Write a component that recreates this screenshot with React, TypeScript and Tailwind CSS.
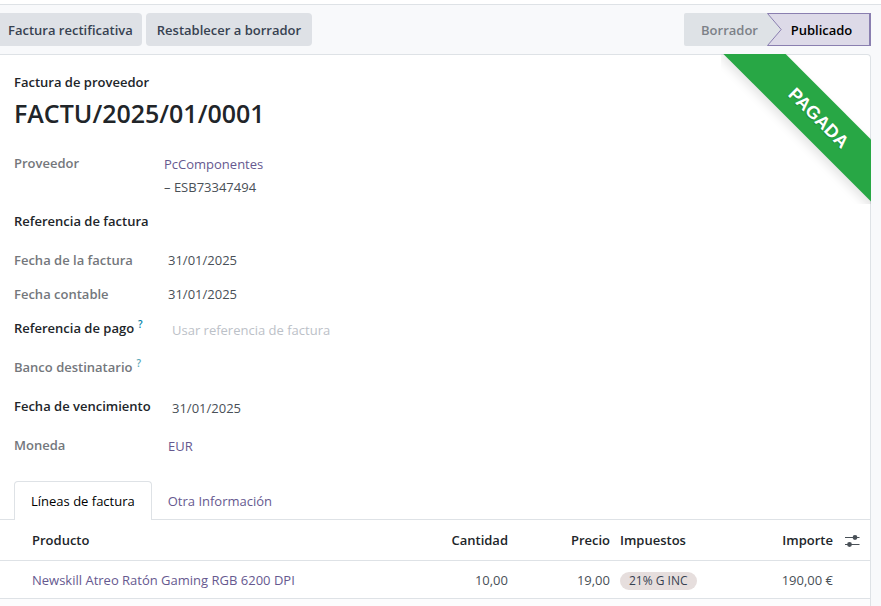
import type { ReactNode } from "react";

const labelText = "text-[13px] leading-5 font-semibold";

function Field({
  id,
  label,
  help,
  muted,
  height,
  children,
}: {
  id: string;
  label: string;
  help?: boolean;
  muted?: boolean;
  height: string;
  children?: ReactNode;
}) {
  return (
    <div className={`flex items-start ${height}`}>
      <label
        htmlFor={id}
        className={`w-[150px] shrink-0 whitespace-nowrap ${labelText} ${muted ? "text-[#74777c]" : "text-[#212529]"}`}
      >
        {label}
        {help && (
          <sup className={`ml-1 text-[10px] ${muted ? "text-[#5ba8b8]" : "text-[#0180a5]"}`}>?</sup>
        )}
      </label>
      {children}
    </div>
  );
}

const inputText =
  "min-w-0 w-60 bg-transparent pl-2 pt-[2px] text-[13px] leading-5 text-[#495057] outline-none placeholder:text-[#bcc1c8]";

function Header() {
  return (
    <header className="flex items-center justify-between border-t border-[#dee2e6] bg-[#f8f9fb] py-2 pr-[10px]">
      <div className="flex gap-1">
        <button className="h-[33px] rounded-r bg-[#dee1e6] pt-[2px] pr-[9px] pl-2 text-[13px] font-semibold text-[#374151]">
          Factura rectificativa
        </button>
        <button className="h-[33px] rounded bg-[#dee1e6] px-[11px] pt-[2px] text-[13px] font-semibold text-[#374151]">
          Restablecer a borrador
        </button>
      </div>
      <div className="flex h-[33px]">
        <button className="w-[83px] rounded-l-xs bg-[#dee2e6] pt-[2px] pl-2 text-[13px] font-semibold text-[#7c8188]">
          Borrador
        </button>
        <div className="flex bg-[#dee2e6]">
          <svg width="15" height="33" viewBox="0 0 15 33" className="block" aria-hidden="true">
            <path d="M0.5 0.5H15V32.5H0.5L14.2 16.5Z" fill="#dddae8" />
            <path d="M15 0.5H0.5L14.2 16.5L0.5 32.5H15" fill="none" stroke="#8a7fb0" />
          </svg>
          <button className="w-[89px] border-y border-r-2 border-[#8a7fb0] bg-[#dddae8] pt-[2px] pr-2 text-[13px] font-semibold text-black">
            Publicado
          </button>
        </div>
      </div>
    </header>
  );
}

function Ribbon() {
  return (
    <div className="pointer-events-none absolute -top-px -right-px size-[150px] overflow-hidden">
      <div className="absolute top-[42px] -left-[15px] flex h-11 w-[225px] rotate-45 items-center justify-center bg-[#28a745] font-['Liberation_Sans',sans-serif] text-[18px] leading-none font-bold text-white shadow-[0_5px_10px_rgba(0,0,0,0.1)] [text-shadow:0_1px_1px_rgba(0,0,0,0.2)]">
        PAGADA
      </div>
    </div>
  );
}

function SlidersIcon() {
  return (
    <svg width="16" height="14" viewBox="0 0 16 14" aria-hidden="true">
      <path d="M1 3.5H15.5M1 10.5H15.5" stroke="#495057" strokeWidth="1.2" />
      <circle cx="11" cy="3.5" r="2.4" fill="#495057" />
      <circle cx="5.5" cy="10.5" r="2.4" fill="#495057" />
    </svg>
  );
}

function Lines() {
  return (
    <table className="w-full table-fixed border-collapse text-[13px] leading-5">
      <colgroup>
        <col />
        <col className="w-[120px]" />
        <col className="w-[102px]" />
        <col className="w-[120px]" />
        <col className="w-[103px]" />
        <col className="w-[37px]" />
      </colgroup>
      <thead>
        <tr className="h-10 border-b border-[#dee2e6] font-semibold text-[#212529]">
          <th className="pl-8 text-left font-semibold">Producto</th>
          <th className="text-right font-semibold">Cantidad</th>
          <th className="text-right font-semibold">Precio</th>
          <th className="pl-[10px] text-left font-semibold">Impuestos</th>
          <th className="text-right font-semibold">Importe</th>
          <th>
            <button aria-label="Columnas opcionales" className="flex w-full justify-center pt-[2px]">
              <SlidersIcon />
            </button>
          </th>
        </tr>
      </thead>
      <tbody>
        <tr className="h-[38px] border-b border-[#dee2e6] text-[#495057] *:pt-[2px]">
          <td className="pl-8">
            <a href="#producto" className="text-[#66598f]">
              Newskill Atreo Ratón Gaming RGB 6200 DPI
            </a>
          </td>
          <td className="text-right">10,00</td>
          <td className="text-right">19,00</td>
          <td className="pl-[10px]">
            <span className="inline-block rounded-full bg-[#e6dedd] px-[9px] text-[12px] leading-[18px] font-medium text-[#374151]">
              21% G INC
            </span>
          </td>
          <td className="text-right">190,00 €</td>
          <td />
        </tr>
      </tbody>
    </table>
  );
}

export default function App() {
  return (
    <div className="flex min-h-screen flex-col bg-[#f8f9fb] font-['Open_Sans','Noto_Sans',sans-serif]">
      <div className="h-1 bg-white" />
      <Header />
      <main className="relative mr-[10px] flex grow flex-col rounded-tr border-t border-r border-[#dee2e6] bg-white">
        <Ribbon />
        <section className="px-[14px] pt-[17px]">
          <p className={`${labelText} text-[#212529]`}>Factura de proveedor</p>
          <h1 className="mt-[3px] text-[25px] leading-9 font-semibold text-[#212529]">FACTU/2025/01/0001</h1>
          <div className="mt-[22px]">
            <Field id="proveedor" label="Proveedor" muted height="h-[58px]">
              <output id="proveedor" className="text-[13px] leading-[23px] text-[#495057]">
                <a href="#proveedor" className="text-[#66598f]">
                  PcComponentes
                </a>
                <br />– ESB73347494
              </output>
            </Field>
            <Field id="referencia" label="Referencia de factura" height="h-[39px]">
              <input id="referencia" className={inputText} />
            </Field>
            <Field id="fecha" label="Fecha de la factura" muted height="h-[34px]">
              <output id="fecha" className="pl-1 text-[13px] leading-5 text-[#495057]">
                31/01/2025
              </output>
            </Field>
            <Field id="contable" label="Fecha contable" muted height="h-[34px]">
              <output id="contable" className="pl-1 text-[13px] leading-5 text-[#495057]">
                31/01/2025
              </output>
            </Field>
            <Field id="pago" label="Referencia de pago" help height="h-[39px]">
              <input id="pago" placeholder="Usar referencia de factura" className={inputText} />
            </Field>
            <Field id="banco" label="Banco destinatario" help muted height="h-[39px]">
              <output id="banco" />
            </Field>
            <Field id="vencimiento" label="Fecha de vencimiento" height="h-[39px]">
              <input id="vencimiento" defaultValue="31/01/2025" className={inputText} />
            </Field>
            <Field id="moneda" label="Moneda" muted height="h-[46px]">
              <output id="moneda" className="pl-1 text-[13px] leading-[22px]">
                <a href="#moneda" className="text-[#66598f]">
                  EUR
                </a>
              </output>
            </Field>
          </div>
        </section>
        <div role="tablist" className="flex border-b border-[#dee2e6] pl-[14px] text-[13px]">
          <button
            role="tab"
            aria-selected="true"
            className="-mb-px h-[39px] rounded-t border border-b-0 border-[#dee2e6] bg-white px-4 pt-[2px] text-black"
          >
            Líneas de factura
          </button>
          <button role="tab" aria-selected="false" className="px-4 pt-1 text-[#66598f]">
            Otra Información
          </button>
        </div>
        <Lines />
        <div className="grow bg-[#fcfcfd]" />
      </main>
    </div>
  );
}
